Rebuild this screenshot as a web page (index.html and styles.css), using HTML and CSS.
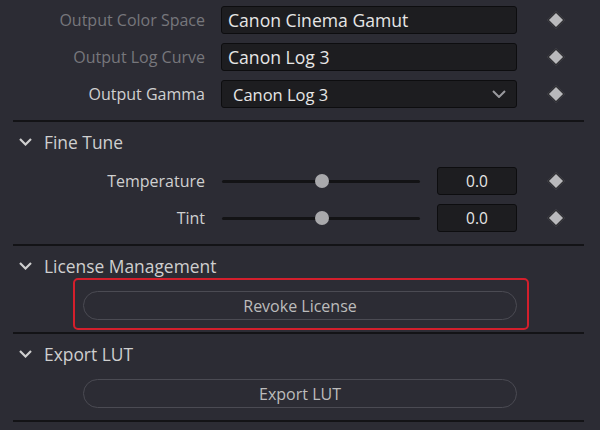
FILE: index.html
```html
<!DOCTYPE html>
<html lang="en">
<head>
    <meta charset="UTF-8">
    <title>Colour Space Transform</title>
    <link rel="stylesheet" href="styles.css">
</head>
<body>

<div class="panel">
    <div class="section first">
        <div class="row">
            <label class="label dim">Output Color Space</label>
            <div class="field big">Canon Cinema Gamut</div>
            <span class="key"></span>
        </div>
        <div class="row">
            <label class="label dim">Output Log Curve</label>
            <div class="field big">Canon Log 3</div>
            <span class="key"></span>
        </div>
        <div class="row">
            <label class="label">Output Gamma</label>
            <div class="field select">
                <span>Canon Log 3</span>
                <svg class="caret" width="14" height="8" viewBox="0 0 14 8"><path d="M1 1l6 6 6-6" fill="none" stroke="#9a9a9e" stroke-width="2"/></svg>
            </div>
            <span class="key"></span>
        </div>
    </div>
    <hr class="divider">

    <div class="section">
        <div class="header">
            <svg class="chev" width="13" height="8" viewBox="0 0 13 8"><path d="M1 1l5.5 5.5L12 1" fill="none" stroke="#cfcfcf" stroke-width="2.2"/></svg>
            <span>Fine Tune</span>
        </div>
        <div class="row">
            <label class="label">Temperature</label>
            <div class="slider-cell">
                <div class="slider"><span class="knob"></span></div>
                <div class="field value">0.0</div>
            </div>
            <span class="key"></span>
        </div>
        <div class="row">
            <label class="label">Tint</label>
            <div class="slider-cell">
                <div class="slider"><span class="knob"></span></div>
                <div class="field value">0.0</div>
            </div>
            <span class="key"></span>
        </div>
    </div>
    <hr class="divider">

    <div class="section">
        <div class="header">
            <svg class="chev" width="13" height="8" viewBox="0 0 13 8"><path d="M1 1l5.5 5.5L12 1" fill="none" stroke="#cfcfcf" stroke-width="2.2"/></svg>
            <span>License Management</span>
        </div>
        <div class="btn-row highlight">
            <button class="pill">Revoke License</button>
        </div>
    </div>
    <hr class="divider">

    <div class="section">
        <div class="header">
            <svg class="chev" width="13" height="8" viewBox="0 0 13 8"><path d="M1 1l5.5 5.5L12 1" fill="none" stroke="#cfcfcf" stroke-width="2.2"/></svg>
            <span>Export LUT</span>
        </div>
        <div class="btn-row">
            <button class="pill">Export LUT</button>
        </div>
    </div>
    <hr class="divider">
</div>

</body>
</html>
```

FILE: styles.css
```css
body {
    margin: 0;
    background-color: #2c2c34;
    font-family: "Open Sans", "Noto Sans", sans-serif;
    color: #d4d4d4;
}

.panel {
    width: 600px;
    height: 430px;
    overflow: hidden;
    padding-top: 6px;
    box-sizing: border-box;
}

.section {
    display: flex;
    flex-direction: column;
    gap: 9px;
    padding-bottom: 12px;
}

.divider {
    margin: 0 16px 0 13px;
    border: none;
    height: 2px;
    background-color: #131316;
}

.header {
    display: flex;
    align-items: center;
    height: 40px;
    margin-bottom: -4px;
    padding-left: 19px;
    font-size: 17.4px;
    color: #cfcfcf;
}
.header .chev {
    margin-right: 12px;
}

.row {
    display: grid;
    grid-template-columns: 205px 296px 1fr;
    column-gap: 16px;
    align-items: center;
    height: 28px;
}

.label {
    text-align: right;
    font-size: 16px;
    color: #d0d0d0;
}
.label.dim {
    color: #77777c;
}

.field {
    box-sizing: border-box;
    height: 28px;
    background-color: #1d1d20;
    border: 1px solid #0d0d0f;
    border-radius: 3px;
    display: flex;
    align-items: center;
    padding-left: 6px;
    color: #e6e6e6;
}
.field.big {
    font-size: 17.6px;
}
.field.select {
    font-size: 16.5px;
    padding-left: 11px;
    padding-right: 10px;
    justify-content: space-between;
}

.key {
    justify-self: start;
    margin-left: 17px;
    width: 10px;
    height: 10px;
    background-color: #b9b9bc;
    border: 1px solid #1e1e22;
    transform: rotate(45deg);
}

.slider-cell {
    display: flex;
    align-items: center;
    gap: 17px;
}
.slider {
    position: relative;
    flex: 1;
    height: 3px;
    margin-left: 1px;
    background-color: #131315;
    border-radius: 2px;
}
.knob {
    position: absolute;
    left: 93px;
    top: -6px;
    width: 14px;
    height: 14px;
    border-radius: 50%;
    background-color: #a9a9ac;
}
.field.value {
    width: 80px;
    justify-content: center;
    padding-left: 0;
    font-size: 15.5px;
}

.btn-row {
    position: relative;
    margin: 0 83px;
}
.highlight::after {
    content: "";
    position: absolute;
    left: -10px;
    right: -12px;
    top: -13px;
    bottom: -10px;
    border: 2px solid #d41f2c;
    border-radius: 5px;
}

.pill {
    display: block;
    width: 100%;
    height: 29px;
    background-color: #2c2c34;
    border: 1.5px solid #4b4b53;
    border-radius: 15px;
    font-family: "Open Sans", "Noto Sans", sans-serif;
    font-size: 16px;
    color: #bcbcbc;
}
```
